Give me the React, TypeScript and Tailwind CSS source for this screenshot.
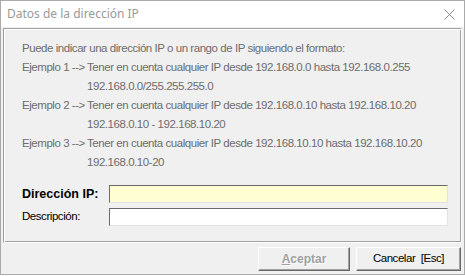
import React from "react";

const gray = "text-[#6d6d6d]";
const sans = '"Liberation Sans", Arial, sans-serif';

function Row({ label, a, b }: { label: string; a: string; b: string }) {
  return (
    <div className="flex flex-col">
      <div className="flex h-[19px] items-center">
        <span className="w-[65px] shrink-0 whitespace-nowrap">{label}</span>
        <span className="whitespace-nowrap">{a}</span>
      </div>
      <div className="flex h-[19px] items-center">
        <span className="w-[65px] shrink-0" />
        <span className="whitespace-nowrap">{b}</span>
      </div>
    </div>
  );
}

export default function App() {
  return (
    <div
      className="w-[465px] h-[276px] bg-white overflow-hidden"
      style={{ fontFamily: sans }}
    >
      <div className="w-[465px] h-[275px] border border-[#aaaaaa] flex flex-col">
        <div className="h-[26px] flex items-center justify-between pl-[6px] pr-[9px] bg-white shrink-0">
          <span
            className="text-[12px] text-[#999999]"
            style={{ fontFamily: '"Noto Sans", "Open Sans", sans-serif' }}
          >
            Datos de la dirección IP
          </span>
          <svg width="11" height="11" viewBox="0 0 11 11">
            <path d="M0.5 0.5 L10.5 10.5 M10.5 0.5 L0.5 10.5" stroke="#8a8a8a" strokeWidth="1" />
          </svg>
        </div>
        <div className="flex-1 bg-[#f0f0f0] flex flex-col pl-[2px] pr-[2px] pt-[1px]">
          <div className="h-[215px] border border-t-[#a0a0a0] border-l-[#a0a0a0] border-b-white border-r-white shadow-[inset_1px_1px_0_#ffffff,inset_-1px_-1px_0_#a0a0a0] flex flex-col pl-[18px] pt-[10px]">
            <div className={`flex flex-col text-[11.5px] tracking-[-0.45px] ${gray}`}>
              <div className="flex h-[19px] items-center whitespace-nowrap">
                Puede indicar una dirección IP o un rango de IP siguiendo el formato:
              </div>
              <Row
                label="Ejemplo 1 -->"
                a="Tener en cuenta cualquier IP desde 192.168.0.0 hasta 192.168.0.255"
                b="192.168.0.0/255.255.255.0"
              />
              <Row
                label="Ejemplo 2 -->"
                a="Tener en cuenta cualquier IP desde 192.168.0.10 hasta 192.168.10.20"
                b="192.168.0.10 - 192.168.10.20"
              />
              <Row
                label="Ejemplo 3 -->"
                a="Tener en cuenta cualquier IP desde 192.168.10.10 hasta 192.168.10.20"
                b="192.168.0.10-20"
              />
            </div>
            <div className="flex flex-col gap-[5px] mt-[13px]">
              <div className="flex items-center h-[18px]">
                <span className="w-[87px] shrink-0 text-[12.5px] font-bold text-black">
                  Dirección IP:
                </span>
                <div className="w-[339px] h-[18px] bg-[#ffffd2] border border-t-[#6b6b6b] border-l-[#6b6b6b] border-b-[#e3e3e3] border-r-[#e3e3e3]" />
              </div>
              <div className="flex items-center h-[18px]">
                <span className="w-[87px] shrink-0 text-[11.5px] tracking-[-0.45px] text-black">Descripción:</span>
                <div className="w-[339px] h-[18px] bg-white border border-t-[#6b6b6b] border-l-[#6b6b6b] border-b-[#e3e3e3] border-r-[#e3e3e3]" />
              </div>
            </div>
          </div>
          <div className="flex justify-end gap-[6px] pt-[4px] pr-[1px]">
            <div className="w-[92px] h-[24px] flex items-center justify-center border border-t-white border-l-white border-b-[#696969] border-r-[#696969] shadow-[inset_-1px_-1px_0_#a0a0a0] text-[12px] font-bold text-[#a0a0a0]">
              <span style={{ textShadow: "1px 1px 0 #ffffff" }}>
                <span className="underline">A</span>ceptar
              </span>
            </div>
            <div className="w-[105px] h-[24px] flex items-center justify-center border border-t-white border-l-white border-b-[#696969] border-r-[#696969] shadow-[inset_-1px_-1px_0_#a0a0a0] text-[11.5px] tracking-[-0.45px] text-black">
              Cancelar&nbsp;&nbsp;[Esc]
            </div>
          </div>
        </div>
      </div>
    </div>
  );
}
